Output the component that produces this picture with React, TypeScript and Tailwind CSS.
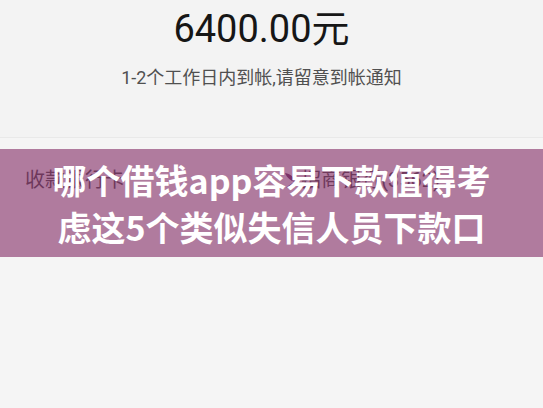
import { useState } from 'react';

const font = { fontFamily: 'Roboto, "Noto Sans CJK SC", sans-serif' };

function BankIcon() {
  return (
    <svg width="16" height="20" viewBox="0 0 16 20" className="shrink-0">
      <path d="M2 3 C8 4 12 8 12 12 C8 11 4 8 2 3 Z" fill="#5b1f4f" />
      <path d="M12 12 C10 15 7 17 3 18 C6 15 9 13 12 12 Z" fill="#5b1f4f" />
    </svg>
  );
}

export default function App() {
  const [amount] = useState('6400.00');

  return (
    <div className="w-[543px] h-[408px] overflow-hidden bg-[#f5f5f5]" style={font}>
      <section className="h-[138px] bg-[#f3f3f3] border-b border-[#e9e9e9] flex flex-col items-center pt-[4px] pr-[20px]">
        <div className="text-[38px] leading-[50px] text-[#161616]">
          {amount}元
        </div>
        <div className="mt-[12px] text-[18px] leading-[24px] text-[#505050]">
          1-2个工作日内到帐,请留意到帐通知
        </div>
      </section>

      <div className="relative">
        <div className="flex items-center justify-between pl-[25px] pr-[103px] pt-[24px] h-[60px] text-[20px] text-[#333]">
          <span>收款银行卡</span>
          <span className="flex items-center gap-[2px]">
            <BankIcon />
            <span>招商银行(3562)</span>
          </span>
        </div>

        {/* title banner over the row */}
        <div className="absolute left-0 right-0 top-[11px] h-[108px] bg-[rgba(140,59,113,0.66)] flex flex-col items-center justify-center">
          <p className="text-white font-bold text-[34px] leading-[47px] text-center" style={{ fontFamily: '"Noto Sans CJK SC", sans-serif' }}>
            哪个借钱app容易下款值得考
            <br />
            虑这5个类似失信人员下款口
          </p>
        </div>
      </div>
    </div>
  );
}
